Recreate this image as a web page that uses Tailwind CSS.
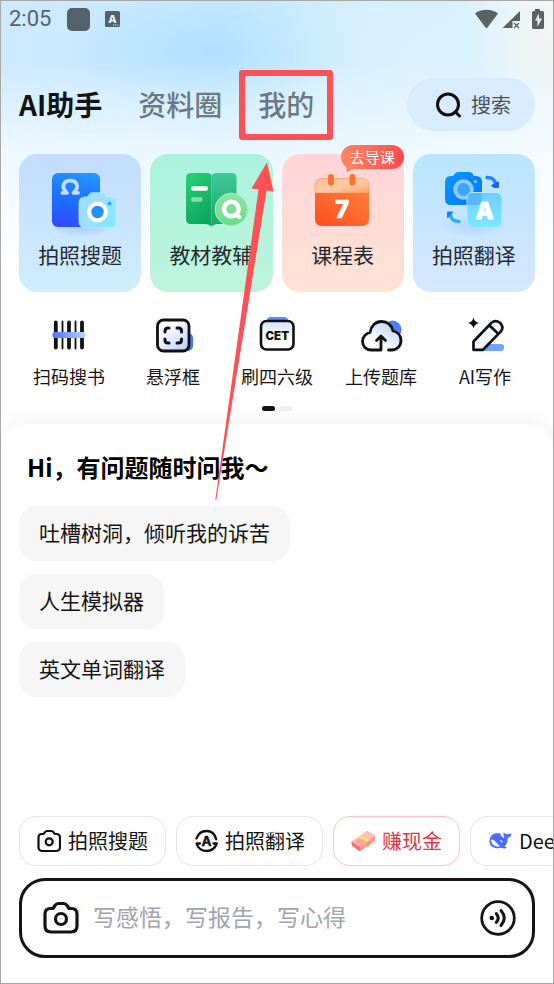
<!DOCTYPE html>
<html lang="zh-CN">
<head>
<meta charset="utf-8">
<meta name="viewport" content="width=device-width, initial-scale=1">
<title>AI助手</title>
<script src="https://cdn.jsdelivr.net/npm/@tailwindcss/browser@4"></script>
</head>
<body class="font-['Noto_Sans_CJK_SC',sans-serif] text-[#141414]">
<div class="relative flex min-h-screen flex-col overflow-hidden border border-[#a8a8a8] bg-white">
  <!-- Sky backdrop -->
  <div class="absolute inset-x-0 top-0 h-[300px] bg-linear-to-r from-[#cdeaff] via-[#c4e8ff] to-[#e2f5fb]" aria-hidden="true">
    <div class="absolute inset-0 bg-[radial-gradient(ellipse_150px_60px_at_215px_50px,#b0e0ff,transparent)]"></div>
    <div class="absolute inset-0 bg-[radial-gradient(ellipse_200px_150px_at_420px_50px,#daf1ff,transparent)]"></div>
    <div class="absolute inset-0 bg-[radial-gradient(ellipse_90px_150px_at_100%_20px,#f5f7f3,transparent)]"></div>
    <div class="absolute inset-0 bg-linear-to-b from-white/0 from-20% via-white/65 via-50% to-white to-90%"></div>
  </div>

  <div class="relative flex h-[36px] items-center px-2 text-[#56636a]">
    <span class="font-[Roboto,sans-serif] text-[22px] leading-6">2:05</span>
    <span class="ml-4 size-[23px] rounded-[5px] bg-[#53616a]"></span>
    <svg class="ml-[15px] h-4 w-[15px]" viewBox="0 0 15 16" aria-hidden="true"><rect width="15" height="16" rx="1.5" fill="#53616a"/><text x="7.5" y="11.5" text-anchor="middle" font-family="Inter" font-weight="800" font-size="11" fill="#e4f3fd">A</text><path d="M8 14h1.2M10.3 14h1.2M12.6 14h1" stroke="#e4f3fd"/></svg>
    <svg class="ml-auto h-[22px] w-[70px]" viewBox="475 7 70 22" aria-hidden="true">
      <g fill="#5b6262"><path d="M475 12.5C481 7.6 492 7.6 498 12.5L487.500 26.500Q486.500 27.500 485.500 26.500Z"/><path d="M520 10V20H512.500V27H502.500Z"/><path d="M514 22l5 5m0-5l-5 5" stroke="#5b6262" stroke-width="1.300"/><path d="M535 8h5v2h2.500Q544 10 544 11.500V26.500Q544 28 542.500 28h-9Q532 28 532 26.500v-15Q532 10 533.500 10H535Z"/></g>
      <path d="M539 12.500l-4 7h2.500v6l4.500-8h-3z" fill="#eef8f8"/>
    </svg>
  </div>

  <header class="relative mt-[41px] flex h-[53px] items-center justify-between px-[18px]">
    <nav class="flex items-center gap-9 pb-[2px] text-[28px] leading-10" aria-label="主导航">
      <a href="#" class="font-bold" aria-current="page">AI助手</a>
      <a href="#" class="font-medium text-[#6b7a82]">资料圈</a>
      <a href="#" class="relative font-medium text-[#6b7a82]">我的<span class="absolute -inset-x-[19px] -top-[14px] -bottom-4 rounded-[3px] border-[6px] border-[#fd5153]"></span></a>
    </nav>
    <button type="button" class="flex h-[53px] w-[128px] items-center justify-center gap-2 rounded-full bg-[#d8ecfd] pl-1 text-[20px] text-[#4c5157]">
      <svg class="size-7" viewBox="0 0 28 28" fill="none" stroke="#111" stroke-width="3" stroke-linecap="round" aria-hidden="true"><circle cx="13" cy="13.500" r="10.500"/><path d="M20.500 21l4 4"/></svg>
      搜索
    </button>
  </header>

  <section class="relative mt-[23px] grid grid-cols-4 gap-[9px] px-[18px] text-[21px] leading-8 text-[#262a2e]">
    <a href="#" class="flex h-[138px] flex-col items-center rounded-[18px] bg-linear-to-b from-[#c2ddff] to-[#cfeeff]">
      <svg class="h-[84px] w-[122px]" viewBox="0 0 122 84" aria-hidden="true">
        <defs><linearGradient id="b1" x1=".7" y1="0" x2=".5" y2="1"><stop stop-color="#2596ff"/><stop offset=".6" stop-color="#1b6cff"/><stop offset="1" stop-color="#304eff"/></linearGradient><linearGradient id="b2" x1="0" y1="0" x2="1" y2="1"><stop stop-color="#9ddcff"/><stop offset=".5" stop-color="#9fe0ff"/><stop offset="1" stop-color="#72eeff"/></linearGradient><radialGradient id="sh"><stop stop-color="#5288ff" stop-opacity=".3"/><stop offset="1" stop-color="#5288ff" stop-opacity="0"/></radialGradient></defs>
        <ellipse cx="63" cy="72" rx="34" ry="11" fill="url(#sh)"/>
        <rect x="33" y="19" width="48" height="54" rx="6" fill="url(#b1)"/>
        <path d="M43.500 38.800h4.500C41.500 33 44.500 26.700 51.200 26.700S61 33 54.500 38.800H59" fill="none" stroke="#c5ddff" stroke-width="3.800" stroke-linejoin="round" stroke-linecap="round"/>
        <path d="M66 43h1.500q1.500 0 2.500-2l.5-1q.8-1.200 2.500-1.200h10q1.700 0 2.500 1.200l.5 1q1 2 2.500 2H91q6 0 6 6v18.500q0 6-6 6H66q-6 0-6-6V49q0-6 6-6Z" fill="url(#b2)" stroke="#b9ecff" stroke-width=".8"/>
        <circle cx="78.500" cy="58" r="8.300" fill="#2291ff" stroke="#fff" stroke-width="4.200"/><circle cx="90.500" cy="49.500" r="2" fill="#17b3f0"/>
      </svg>
      拍照搜题
    </a>
    <a href="#" class="flex h-[138px] flex-col items-center rounded-[18px] bg-linear-to-b from-[#aaf3df] to-[#bff4dc]">
      <svg class="h-[84px] w-[122px]" viewBox="0 0 122 84" aria-hidden="true">
        <defs><linearGradient id="g1" x1="0" y1="0" x2=".4" y2="1"><stop stop-color="#2bd077"/><stop offset="1" stop-color="#0ea85d"/></linearGradient><linearGradient id="g2" x1="0" y1="0" x2="0" y2="1"><stop stop-color="#41c79c"/><stop offset="1" stop-color="#17a764"/></linearGradient><linearGradient id="g3" x1="0" y1="0" x2="0" y2="1"><stop stop-color="#91e3a5"/><stop offset="1" stop-color="#65dd88"/></linearGradient></defs>
        <path d="M61.500 21q2-2 5-2H82q4.500 0 4.500 4.500V65q0 5-5 5H67q-3 0-5.500 2.500Z" fill="url(#g2)"/>
        <path d="M41 19h16q3 0 4.500 2v51.500Q59 70 56 70H41q-5 0-5-5V24q0-5 5-5Z" fill="url(#g1)"/>
        <path d="M43.300 34.500h12.500" stroke="#fff" stroke-width="4.600" stroke-linecap="round"/><path d="M43.300 45.500h7" stroke="#82dfa9" stroke-width="4.600" stroke-linecap="round"/>
        <circle cx="81.300" cy="55.500" r="16.300" fill="url(#g3)" stroke="#a5efb3"/>
        <circle cx="81.300" cy="55" r="7.300" fill="none" stroke="#fff" stroke-width="4.600"/><path d="M86 61l3.500 2" stroke="#fff" stroke-width="4" stroke-linecap="round"/>
      </svg>
      教材教辅
    </a>
    <a href="#" class="relative flex h-[138px] flex-col items-center rounded-[18px] bg-linear-to-b from-[#ffd5d7] to-[#ffe4d5]">
      <svg class="h-[84px] w-[122px]" viewBox="0 0 122 84" aria-hidden="true">
        <defs><linearGradient id="o1" x1="0" y1="1" x2="1" y2="0"><stop stop-color="#ff4d1f"/><stop offset="1" stop-color="#ff7e3a"/></linearGradient><linearGradient id="o2" x1="0" y1="0" x2="1" y2="1"><stop stop-color="#ffbb91"/><stop offset=".5" stop-color="#ffcba8"/><stop offset="1" stop-color="#ffa361"/></linearGradient></defs>
        <path d="M33 39V32q0-7.500 7.500-7.500h39q7.500 0 7.500 7.500v7Z" fill="url(#o2)" stroke="#ff9868" stroke-width=".7"/>
        <path d="M33 39h54v26q0 7-7 7H40q-7 0-7-7Z" fill="url(#o1)"/>
        <path d="M49 23v5.500M70.500 23v5.500" stroke="#fb742c" stroke-width="6" stroke-linecap="round"/>
        <text x="60" y="63.500" text-anchor="middle" font-family="Inter" font-weight="800" font-size="24" fill="#fff" stroke="#fff" stroke-width=".7" stroke-linejoin="round">7</text>
      </svg>
      课程表
      <span class="absolute -top-[9px] right-0 flex h-6 items-center rounded-full bg-linear-to-r from-[#ff8662] to-[#ff474d] px-[9px] text-[15px] text-white">去导课<svg class="absolute top-[20px] left-[4px] h-2 w-3" viewBox="0 0 12 8" aria-hidden="true"><path d="M1 0l1 7.500Q6 4 12 3.500V0Z" fill="#ff825f"/></svg></span>
    </a>
    <a href="#" class="flex h-[138px] flex-col items-center rounded-[18px] bg-linear-to-b from-[#b9e5ff] to-[#d7e7ff]">
      <svg class="h-[84px] w-[122px]" viewBox="0 0 122 84" aria-hidden="true">
        <defs><linearGradient id="c1" x1="0" y1="0" x2="1" y2="1"><stop stop-color="#0899ff"/><stop offset="1" stop-color="#0674fa"/></linearGradient><linearGradient id="c2" x1="0" y1="0" x2="0" y2="1"><stop stop-color="#6ecfff"/><stop offset="1" stop-color="#7ce9ff"/></linearGradient></defs>
        <ellipse cx="60" cy="72" rx="34" ry="12" fill="url(#sh)" opacity=".6"/>
        <path d="M38 22h2l2-2.500q1-1.500 3-1.500h11.500q2 0 3 1.500l1.500 2.500h2q6 0 6 6v17q0 6-6 6H38q-6 0-6-6V28q0-6 6-6Z" fill="url(#c1)"/>
        <circle cx="50.500" cy="35.500" r="8.300" fill="#3aa7ff" stroke="#91caff" stroke-width="3.800"/><circle cx="62.500" cy="27.500" r="1.700" fill="#59ccff"/>
        <rect x="54" y="38.500" width="35" height="35" rx="6" fill="url(#c2)" stroke="#b5eaff"/><path d="M54.500 50.800V44.500q0-5.500 5.500-5.500h8.800v6q0 6-6 6Z" fill="#58b7ff"/>
        <text x="71.500" y="64.500" text-anchor="middle" font-family="Inter" font-weight="800" font-size="23" fill="#fff" stroke="#fff" stroke-width="1.200" stroke-linejoin="round">A</text>
        <path d="M74 23.500q8 0 8.500 7" fill="none" stroke="#2a84fb" stroke-width="3.400" stroke-linecap="round"/><path d="M78.500 31.500l7-3.500v5.500h-5Z" fill="#245df2" stroke="#245df2" stroke-linejoin="round"/>
        <path d="M46 67.500q-8 0-8.500-7" fill="none" stroke="#21b2f7" stroke-width="3.400" stroke-linecap="round"/><path d="M34.500 64v-6h5.500Z" fill="#0f88f4" stroke="#0f88f4" stroke-linejoin="round"/>
      </svg>
      拍照翻译
    </a>
  </section>

  <section class="relative mt-[23px] grid grid-cols-5 px-4 text-[18px] leading-6">
    <a href="#" class="flex flex-col items-center gap-[9px]">
      <svg class="h-10 w-11" viewBox="0 0 44 40" aria-hidden="true">
        <defs><linearGradient id="s1"><stop stop-color="#4775fb"/><stop offset="1" stop-color="#bdd1ff"/></linearGradient></defs>
        <g stroke="#111" stroke-linecap="round"><path d="M8.800 7.500v25M22 7.500v25M35 7.500v25" stroke-width="3.800"/><path d="M15.500 6.500v27M28.500 6.500v27" stroke-width="1.800"/></g><rect x="5.500" y="17" width="33" height="6" rx="2.500" fill="url(#s1)"/>
      </svg>扫码搜书</a>
    <a href="#" class="flex flex-col items-center gap-[9px]">
      <svg class="h-10 w-11" viewBox="0 0 44 40" aria-hidden="true">
        <defs><linearGradient id="s2" x1=".3" y1=".2" x2="1" y2="1"><stop stop-color="#fff"/><stop offset="1" stop-color="#b7cbff"/></linearGradient></defs>
        <rect x="26" y="18" width="16" height="18" rx="5" fill="#4778fb"/>
        <rect x="6.500" y="5" width="31.500" height="31" rx="6" fill="url(#s2)" stroke="#111" stroke-width="2.800"/>
        <path d="M14 17v-1q0-3 3-3h1M26 13h1.500q3 0 3 3v1M30.500 24v1q0 3-3 3H26M18 28h-1q-3 0-3-3v-1" fill="none" stroke="#111" stroke-width="3" stroke-linecap="round"/>
      </svg>悬浮框</a>
    <a href="#" class="flex flex-col items-center gap-[9px]">
      <svg class="h-10 w-11" viewBox="0 0 44 40" aria-hidden="true">
        <defs><linearGradient id="s3" x1="0" y1="0" x2="0" y2="1"><stop stop-color="#d5e2ff"/><stop offset=".6" stop-color="#fff"/></linearGradient></defs>
        <rect x="12" y="2" width="21" height="12" rx="4" fill="#5d8bff"/>
        <rect x="6" y="6" width="32.500" height="28.500" rx="5.500" fill="url(#s3)" stroke="#111" stroke-width="2.600"/>
        <text x="22.300" y="24.800" text-anchor="middle" font-family="Inter" font-weight="900" font-size="11.500" fill="#111">CET</text>
      </svg>刷四六级</a>
    <a href="#" class="flex flex-col items-center gap-[9px]">
      <svg class="h-10 w-11" viewBox="0 0 44 40" aria-hidden="true">
        <defs><linearGradient id="s4" x1=".3" y1=".7" x2=".9" y2=".1"><stop stop-color="#fff"/><stop offset="1" stop-color="#bdd0ff"/></linearGradient></defs>
        <circle cx="33.500" cy="14.500" r="9" fill="#4d7dff"/>
        <path d="M22 35H12C7 35 3.500 31 3.500 26.500 3.500 22 7 18.500 11 17.500 12 11 16.500 6.500 22.500 6.500S33 10.500 34 16c4.500 1 8 4.500 8 10 0 5-4 8.700-9 8.700H30Z" fill="url(#s4)"/>
        <path d="M22 27v8H12C7 35 3.500 31 3.500 26.500 3.500 22 7 18.500 11 17.500 12 11 16.500 6.500 22.500 6.500S33 10.500 34 16c4.500 1 8 4.500 8 9.500 0 5.500-4 9.500-9 9.500h-3.500M22 34V21.500m-4.500 4L22 21l4.500 4.500" fill="none" stroke="#111" stroke-width="2.800" stroke-linecap="round" stroke-linejoin="round"/>
      </svg>上传题库</a>
    <a href="#" class="flex flex-col items-center gap-[9px]">
      <svg class="h-10 w-11" viewBox="0 0 44 40" aria-hidden="true">
        <rect x="17" y="29" width="24" height="7" rx="3" fill="#71a3ff"/>
        <path d="M10.500 34.800V26.500L28.500 7.800q4-3.500 8.500 0 4.500 4.500.7 8.800L20 34.800Z" fill="#f3f6ff" stroke="#111" stroke-width="2.700" stroke-linejoin="round"/><path d="M26.500 10.500l8.500 8" stroke="#111" stroke-width="2.700"/>
        <path d="M10.500 2.500q1 4.500 5.500 5.500-4.500 1-5.500 5.500Q9.500 9 5 8q4.500-1 5.500-5.500Z" fill="#111"/>
      </svg>AI写作</a>
  </section>

  <div class="relative mt-[18px] flex justify-center gap-1" aria-hidden="true"><span class="h-[5px] w-[13px] rounded-full bg-[#141414]"></span><span class="h-[5px] w-[13px] rounded-full bg-[#f0f0f0]"></span></div>

  <main class="relative mt-[13px] flex flex-1 flex-col rounded-t-[24px] bg-white px-[18px] pb-[25px] shadow-[0_-2px_22px_rgba(0,0,0,0.06)]">
    <h1 class="mt-[25px] pl-2 text-[24px] leading-9 font-bold text-black">Hi，有问题随时问我～</h1>
    <div class="mt-[21px] flex flex-col items-start gap-[13px] text-[21px]">
      <button type="button" class="h-[55px] rounded-[18px] bg-[#f6f6f6] px-5 pb-[2px]">吐槽树洞，倾听我的诉苦</button>
      <button type="button" class="h-[55px] rounded-[18px] bg-[#f6f6f6] px-5 pb-[2px]">人生模拟器</button>
      <button type="button" class="h-[55px] rounded-[18px] bg-[#f6f6f6] px-5 pb-[2px]">英文单词翻译</button>
    </div>

    <div class="-mr-[18px] mt-auto flex gap-[10px] overflow-hidden pt-8 text-[20px]">
      <button type="button" class="flex h-[50px] shrink-0 items-center gap-[7px] rounded-[17px] border border-[#e6e6e6] px-[17px]">
        <svg class="size-6" viewBox="0 0 24 24" fill="none" stroke="#111" stroke-width="2.200" stroke-linejoin="round" aria-hidden="true"><path d="M4.500 5h2.200l1.300-1.900Q8.700 2 10 2h4.400q1.300 0 2 1.100L17.700 5h1.800Q23 5 23 9v9q0 4-4 4H5.500q-4 0-4-4V9q0-4 3-4Z"/><circle cx="12.200" cy="12.800" r="3.500"/></svg>拍照搜题</button>
      <button type="button" class="flex h-[50px] shrink-0 items-center gap-[7px] rounded-[17px] border border-[#e6e6e6] px-[17px]">
        <svg class="size-6" viewBox="0 0 24 24" fill="none" stroke="#111" stroke-width="2.300" stroke-linecap="round" stroke-linejoin="round" aria-hidden="true"><path d="M2.500 9.500Q5 2 12.500 2T22.200 10.200M22.800 14.500Q20 22 12.500 22T2.500 14.500h3.500M22.800 14.500H19.500"/><text x="12.500" y="17" text-anchor="middle" font-family="Inter" font-weight="700" font-size="13.500" fill="#111" stroke-width=".4">A</text></svg>拍照翻译</button>
      <button type="button" class="flex h-[50px] shrink-0 items-center gap-[7px] rounded-[17px] border border-[#ffc1c5] px-[17px] text-[#e13445]">
        <svg class="size-6" viewBox="0 0 24 24" aria-hidden="true"><path d="M.5 12.500L16 2l8 4.500v4L9 21.500 1 16.500Z" fill="#ff9d98"/><path d="M.5 12.500L9 17.500v5L1 17Z" fill="#f57277"/><path d="M9 17.500L24 7v5L9 22.500Z" fill="#ff9a92"/><path d="M.5 12.500L16 2l8 5L9 17.500Z" fill="#ffc0b6"/><path d="M3.500 12.500l7-4.500 6 4-7 4.500Z" fill="#ffa49f"/><path d="M7 8l3-2 9 5v5l-3 2v-5Z" fill="#ffdf76"/><path d="M16 13l3-2v5l-3 2Z" fill="#ef9e52"/></svg>赚现金</button>
      <button type="button" class="flex h-[50px] shrink-0 items-center gap-[7px] rounded-[17px] border border-[#e6e6e6] px-[17px]">
        <svg class="size-6" viewBox="0 0 24 24" aria-hidden="true"><path d="M1.500 12.500C1.500 7 5 4 9 4.200c1.300 0 2.600.3 3.200-.2-.2 2.400 2.200 3.500 4 5.500C16 7 15 6 15.500 3.500 17 4 17.500 5.500 19 5.200c1.800 0 3-.8 4.500-.7-.3 2.500-1.500 4-3.800 4.500.2 4-1 6.300-3.200 8.200.8.700 1.500 1 2.500 1.500-2 1.300-3.700.8-5.300.1C7 20.500 1.500 17.500 1.500 12.500Z" fill="#4d6bfe"/><path d="M3 10.500c3-.3 5.800 3.500 9 6.800-4.500 1.300-9-2-9-6.800ZM12 11c1.200-.2 2.700 1 2.800 2.600C13.500 13 12.500 12.500 12 11Z" fill="#fff"/></svg>DeepSeek</button>
    </div>

    <div class="mt-3 flex h-20 items-center rounded-[26px] border-[3px] border-[#141414] pr-[15px] pl-5">
      <button type="button" aria-label="拍照"><svg class="block size-[38px]" viewBox="0 0 38 38" fill="none" stroke="#141414" stroke-width="3.200" stroke-linejoin="round" aria-hidden="true"><path d="M8.500 9.500h2.500l2-3q1.200-2 3.500-2h5q2.300 0 3.500 2l2 3h2.500Q35 9.500 35 15v12q0 6-6 6H9q-6 0-6-6V15q0-5.500 5.500-5.500Z"/><circle cx="19" cy="20" r="5.500"/></svg></button>
      <input type="text" aria-label="输入问题" placeholder="写感悟，写报告，写心得" class="ml-[13px] min-w-0 flex-1 pb-1 text-[23px] leading-8 outline-none placeholder:text-[#a2a4ae]">
      <button type="button" aria-label="语音输入"><svg class="block size-[38px]" viewBox="0 0 38 38" fill="none" stroke="#141414" stroke-width="3" stroke-linecap="round" aria-hidden="true"><circle cx="19" cy="19" r="16.300" stroke-width="2.800"/><circle cx="12.800" cy="19" r="2.300" fill="#141414" stroke="none"/><path d="M17.200 14.500q4 4.500 0 9M22 11.500q6.500 7.500 0 15"/></svg></button>
    </div>
  </main>

  <!-- Pointer arrow -->
  <svg class="pointer-events-none absolute top-[160px] left-[210px] h-[342px] w-[70px]" viewBox="211 161 70 342" aria-hidden="true"><path d="M267 162.500L273.500 191.500 266.500 190.500 249 299 216.300 500H215.300L243.300 299 258.500 189.500 251.500 188.500Z" fill="#fd5153"/></svg>
</div>
</body>
</html>
